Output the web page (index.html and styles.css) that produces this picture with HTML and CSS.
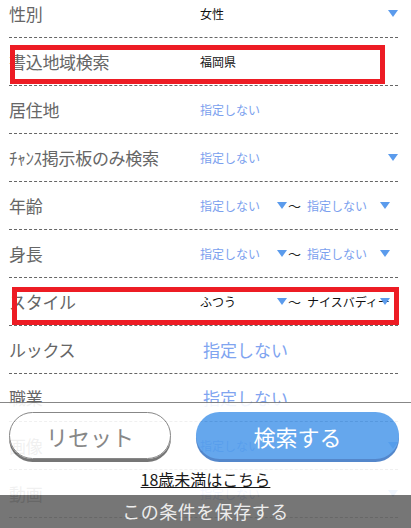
FILE: index.html
```html
<!DOCTYPE html>
<html lang="ja">
<head>
<meta charset="utf-8">
<link rel="stylesheet" href="styles.css">
</head>
<body>
<div class="list">
  <div class="row"><span class="label">性別</span><div class="sel full"><span class="val dark">女性</span><span class="tri"></span></div></div>
  <div class="row"><span class="label">書込地域検索</span><div class="sel full"><span class="val dark">福岡県</span></div></div>
  <div class="row"><span class="label">居住地</span><div class="sel full"><span class="val">指定しない</span></div></div>
  <div class="row"><span class="label">ﾁｬﾝｽ掲示板のみ検索</span><div class="sel full"><span class="val">指定しない</span><span class="tri"></span></div></div>
  <div class="row"><span class="label">年齢</span><div class="sel first"><span class="val">指定しない</span><span class="tri"></span></div><span class="tilde">〜</span><div class="sel second"><span class="val">指定しない</span><span class="tri"></span></div></div>
  <div class="row"><span class="label">身長</span><div class="sel first"><span class="val">指定しない</span><span class="tri"></span></div><span class="tilde">〜</span><div class="sel second"><span class="val">指定しない</span><span class="tri"></span></div></div>
  <div class="row"><span class="label">スタイル</span><div class="sel first"><span class="val dark">ふつう</span><span class="tri"></span></div><span class="tilde">〜</span><div class="sel second"><span class="val dark">ナイスバディー</span><span class="tri"></span></div></div>
  <div class="row"><span class="label">ルックス</span><div class="sel full"><span class="val big">指定しない</span></div></div>
  <div class="row"><span class="label">職業</span><div class="sel full"><span class="val big">指定しない</span></div></div>
  <div class="row"><span class="label">画像</span><div class="sel full"><span class="val">指定しない</span><span class="tri"></span></div></div>
  <div class="row"><span class="label">動画</span><div class="sel full"><span class="val">指定しない</span><span class="tri"></span></div></div>
</div>

<div class="mark mark-area"></div>
<div class="mark mark-style"></div>

<div class="footer">
  <div class="buttons">
    <button class="btn reset">リセット</button>
    <button class="btn search">検索する</button>
  </div>
  <div class="under"><a class="under-link" href="#">18歳未満はこちら</a></div>
  <div class="save">この条件を保存する</div>
</div>
</body>
</html>
```

FILE: styles.css
```css
html, body {
  margin: 0;
  padding: 0;
  background: #fff;
}
body {
  width: 411px;
  height: 528px;
  overflow: hidden;
  position: relative;
  font-family: "Noto Sans CJK JP", "Noto Sans", sans-serif;
}
.list {
  margin-top: -10px;
  padding: 0 13px 0 9px;
}
.row {
  height: 47px;
  border-bottom: 1px dashed #666;
  display: flex;
  align-items: center;
}
.label {
  width: 191px;
  flex: none;
  font-size: 17px;
  line-height: 20px;
  color: #666;
  white-space: nowrap;
  letter-spacing: -0.3px;
}
.sel {
  position: relative;
  display: flex;
  align-items: center;
  height: 20px;
}
.sel.full { width: 198px; }
.sel.first { width: 87px; }
.sel.second { width: 83px; }
.tilde {
  width: 20px;
  font-size: 13px;
  line-height: 20px;
  color: #222;
  text-align: left;
  padding-left: 1px;
  box-sizing: border-box;
}
.val {
  font-size: 12px;
  line-height: 20px;
  color: #7aa0ee;
  white-space: nowrap;
}
.val.dark { color: #111; }
.val.big {
  font-size: 17px;
  color: #80a4f0;
  margin-left: 3px;
}
.tri {
  position: absolute;
  right: 0;
  top: 50%;
  margin-top: -4px;
  width: 0;
  height: 0;
  border-left: 5px solid transparent;
  border-right: 5px solid transparent;
  border-top: 7px solid #5b9bec;
}
.mark {
  position: absolute;
  border: 5px solid #ed1c24;
  box-sizing: border-box;
}
.mark-area { left: 10px; top: 45px; width: 375px; height: 39px; }
.mark-style { left: 12px; top: 287px; width: 387px; height: 38px; }

.footer {
  position: fixed;
  left: 0;
  right: 0;
  bottom: 0;
  height: 125px;
  border-top: 1px solid #7b7b7b;
  background: #fff;
  opacity: 0.9;
  display: flex;
  flex-direction: column;
}
.buttons {
  display: flex;
  gap: 25px;
  padding: 9px 12px 0 9px;
  height: 50px;
}
.btn {
  font-family: inherit;
  height: 47px;
  border-radius: 24px;
  font-size: 22px;
  line-height: 1;
  padding: 0;
  cursor: pointer;
}
.reset {
  width: 162px;
  background: transparent;
  border: 1px solid #7b7b7b;
  color: #7b7b7b;
  box-shadow: 0 3px 0 #686868;
}
.search {
  flex: 1;
  background: #559eec;
  border: none;
  color: #fff;
  box-shadow: 0 3px 0 #427bc6;
}
.under {
  height: 33px;
  display: flex;
  align-items: center;
  justify-content: center;
}
.under-link {
  font-size: 16px;
  line-height: 18px;
  color: #000;
  text-decoration: underline;
}
.save {
  height: 33px;
  background: #686868;
  color: #ececec;
  font-size: 18px;
  line-height: 33px;
  text-align: center;
  letter-spacing: 0.5px;
}
```
